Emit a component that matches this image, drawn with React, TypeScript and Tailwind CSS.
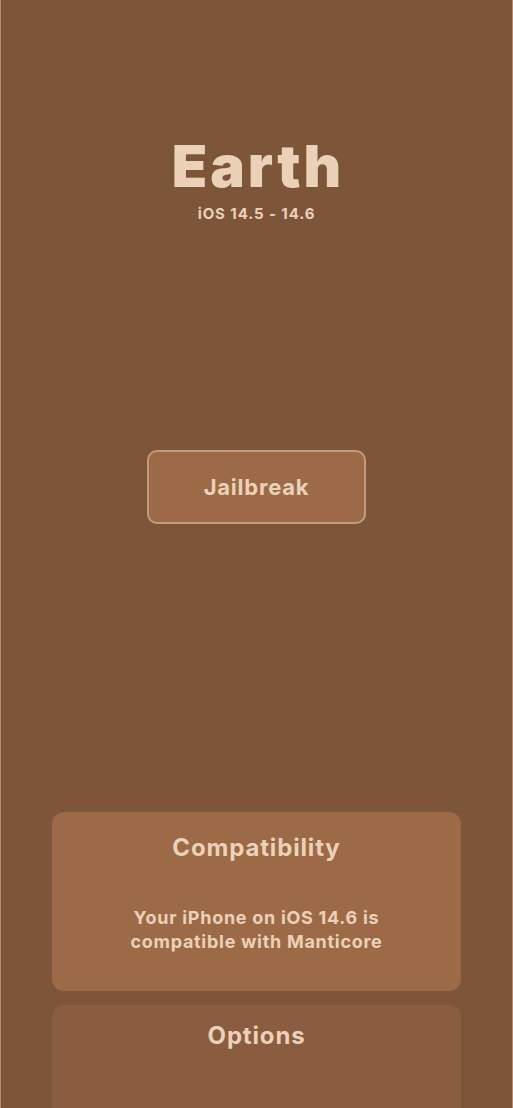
import React from "react";

export default function App() {
  return (
    <div
      className="w-full min-h-[1108px] h-[1108px] overflow-hidden bg-[#7D5539] border-x border-[#B38C72] flex flex-col items-center text-[#EBD1B8]"
      style={{ fontFamily: "Inter, 'Noto Sans', sans-serif" }}
    >
      <h1 className="mt-[137px] text-[58px] leading-[58px] font-black tracking-[0.05em] pl-[0.05em]">Earth</h1>
      <p className="mt-[11px] text-[15px] leading-[15px] font-bold tracking-[0.06em]">iOS 14.5 - 14.6</p>
      <button className="mt-[229px] w-[219px] h-[74px] shrink-0 rounded-[10px] border-2 border-[#C29A7E] bg-[#9D6A48] text-[22px] font-bold tracking-[0.035em] text-[#EBD1B8]">
        Jailbreak
      </button>
      <div className="mt-[288px] w-[409px] h-[179px] shrink-0 rounded-[12px] bg-[#9D6A48] flex flex-col items-center pt-[20px]">
        <h2 className="text-[24px] leading-[32px] font-bold tracking-[0.035em]">Compatibility</h2>
        <p className="mt-[42px] text-[18px] leading-[24px] font-bold text-center tracking-[0.04em]">
          Your iPhone on iOS 14.6 is
          <br />
          compatible with Manticore
        </p>
      </div>
      <div className="mt-[14px] w-[409px] h-[200px] shrink-0 rounded-[12px] bg-[#8A5D41] flex flex-col items-center pt-[15px]">
        <h2 className="text-[24px] leading-[32px] font-bold tracking-[0.035em]">Options</h2>
      </div>
    </div>
  );
}
